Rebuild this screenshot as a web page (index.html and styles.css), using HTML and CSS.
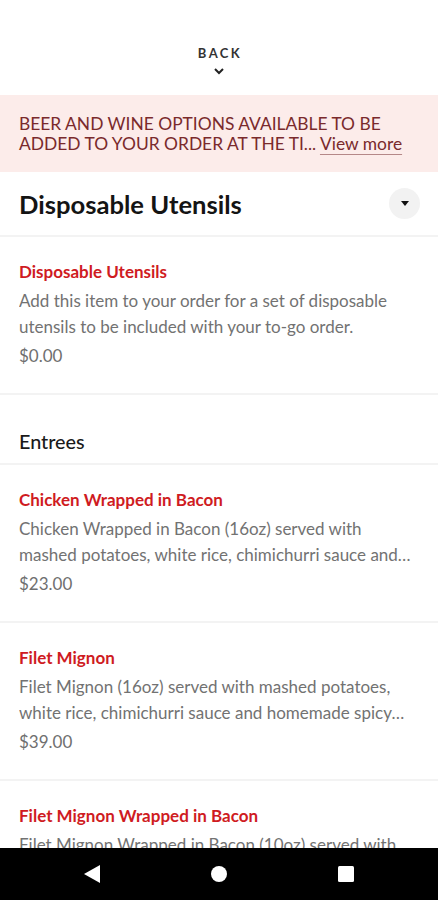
FILE: index.html
```html
<!DOCTYPE html>
<html lang="en">

<head>
    <meta charset="UTF-8">
    <meta name="viewport" content="width=device-width, initial-scale=1.0">
    <title>Menu</title>
    <link rel="stylesheet" href="styles.css">
</head>

<body>
    <div class="screen">
        <div class="back">
            <span class="back-label">BACK</span>
            <svg class="back-chevron" width="12" height="8" viewBox="0 0 12 8">
                <polyline points="2,2 6,6 10,2" fill="none" stroke="#222" stroke-width="2" />
            </svg>
        </div>

        <div class="notice">
            BEER AND WINE OPTIONS AVAILABLE TO BE ADDED TO YOUR ORDER AT THE TI... <a href="#" class="view-more">View more</a>
        </div>

        <div class="section-head">
            <h1>Disposable Utensils</h1>
            <button class="toggle">
                <svg width="8" height="6" viewBox="0 0 8 6"><polygon points="0,0 8,0 4,5" fill="#111" /></svg>
            </button>
        </div>

        <div class="item">
            <div class="item-name">Disposable Utensils</div>
            <div class="item-desc">Add this item to your order for a set of disposable utensils to be included with your to-go order.</div>
            <div class="item-price">$0.00</div>
        </div>

        <div class="category">Entrees</div>

        <div class="item">
            <div class="item-name">Chicken Wrapped in Bacon</div>
            <div class="item-desc">Chicken Wrapped in Bacon (16oz) served with mashed potatoes, white rice, chimichurri sauce and homemade spicy sauce.</div>
            <div class="item-price">$23.00</div>
        </div>

        <div class="item">
            <div class="item-name">Filet Mignon</div>
            <div class="item-desc">Filet Mignon (16oz) served with mashed potatoes, white rice, chimichurri sauce and homemade spicy sauce.</div>
            <div class="item-price">$39.00</div>
        </div>

        <div class="item">
            <div class="item-name">Filet Mignon Wrapped in Bacon</div>
            <div class="item-desc">Filet Mignon Wrapped in Bacon (10oz) served with mashed potatoes, white rice, chimichurri sauce and homemade spicy sauce.</div>
            <div class="item-price">$35.00</div>
        </div>
    </div>

    <nav class="navbar">
        <svg width="18" height="20" viewBox="0 0 18 20"><polygon points="17,1 17,19 1,10" fill="#fff" /></svg>
        <svg width="18" height="18" viewBox="0 0 18 18"><circle cx="9" cy="9" r="8" fill="#fff" /></svg>
        <svg width="18" height="18" viewBox="0 0 18 18"><rect x="1" y="1" width="16" height="16" rx="1.5" fill="#fff" /></svg>
    </nav>
</body>

</html>
```

FILE: styles.css
```css
body {
    margin: 0;
    height: 900px;
    display: flex;
    flex-direction: column;
    overflow: hidden;
    background-color: #fff;
    font-family: 'Lato', 'Liberation Sans', sans-serif;
    color: #1a1a1a;
}

.screen {
    flex: 1;
    overflow: hidden;
}

.back {
    height: 95px;
    display: flex;
    flex-direction: column;
    align-items: center;
    padding-top: 45px;
    box-sizing: border-box;
}

.back-label {
    font-size: 13px;
    letter-spacing: 2.4px;
    line-height: 16px;
    color: #333;
    font-weight: 700;
    padding-left: 2px;
}

.back-chevron {
    margin-top: 6px;
}

.notice {
    background-color: #fcecea;
    color: #7a2a2c;
    font-size: 17.4px;
    line-height: 20px;
    padding: 19px 19px 18px;
    height: 40px;
}

.view-more {
    color: #7a2a2c;
    text-decoration: underline;
    text-decoration-color: #b58888;
    text-underline-offset: 4px;
}

.section-head {
    height: 63px;
    display: flex;
    align-items: center;
    justify-content: space-between;
    padding: 0 18px 0 19px;
    border-bottom: 2px solid #f3f3f3;
}

h1 {
    margin: 0;
    font-size: 25.6px;
    font-weight: 700;
    color: #141414;
}

.toggle {
    width: 31px;
    height: 31px;
    border: none;
    border-radius: 50%;
    background-color: #f2f2f2;
    display: flex;
    align-items: center;
    justify-content: center;
    padding: 0;
}

.item {
    padding: 23px 19px 0;
    border-bottom: 2px solid #f3f3f3;
    height: 133px;
}

.item-name {
    font-size: 17px;
    font-weight: 700;
    color: #cf1b22;
    line-height: 24px;
}

.item-desc {
    margin-top: 4px;
    font-size: 17px;
    line-height: 26px;
    color: #727272;
    display: -webkit-box;
    -webkit-line-clamp: 2;
    -webkit-box-orient: vertical;
    overflow: hidden;
}

.item-price {
    margin-top: 3px;
    font-size: 17px;
    line-height: 26px;
    color: #6f6f6f;
}

.category {
    padding: 35px 19px 11px;
    font-size: 19.8px;
    font-weight: 500;
    line-height: 22px;
    color: #1a1a1a;
    border-bottom: 2px solid #f3f3f3;
}

.navbar {
    height: 52px;
    flex-shrink: 0;
    background-color: #000;
    display: grid;
    grid-template-columns: repeat(3, 1fr);
    justify-items: center;
    align-items: center;
    padding: 0 29px;
}
```
